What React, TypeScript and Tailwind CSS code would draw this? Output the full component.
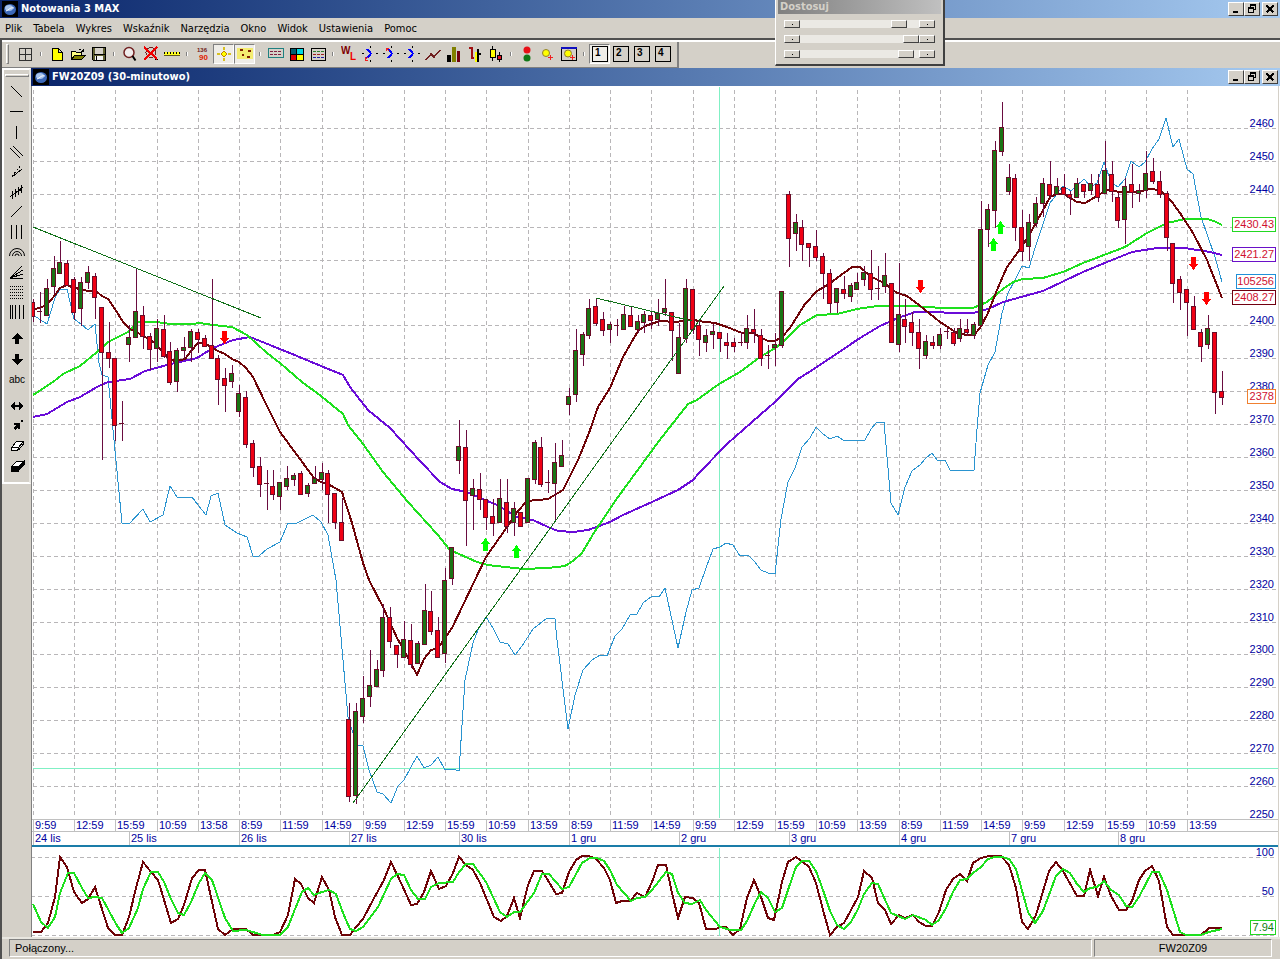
import type { ReactNode } from 'react';
import clsx from 'clsx';

type Candle = [dir: 'u' | 'd', top: number, bottom: number, high: number, low: number];

const CANDLES: Candle[] = [
  // 24 lis
  ['d', 302, 316, 299, 321], ['d', 311, 311, 292, 322], ['u', 288, 315, 279, 315], ['u', 268, 286, 256, 293],
  ['u', 262, 273, 241, 273], ['d', 263, 285, 260, 285], ['d', 279, 312, 277, 319], ['u', 282, 308, 277, 325],
  ['u', 272, 282, 266, 288], ['d', 276, 297, 273, 318], ['d', 307, 352, 307, 459], ['d', 352, 358, 322, 367],
  ['d', 358, 425, 358, 440], ['d', 423, 423, 401, 440],
  // 25 lis
  ['u', 337, 344, 325, 361], ['u', 311, 337, 269, 337], ['d', 315, 336, 306, 348], ['d', 336, 349, 333, 369],
  ['u', 328, 348, 319, 361], ['d', 329, 356, 315, 357], ['d', 351, 382, 342, 384], ['u', 350, 381, 348, 391],
  ['u', 347, 350, 337, 358], ['u', 331, 347, 329, 361], ['d', 332, 339, 329, 352], ['d', 338, 346, 335, 346],
  ['d', 345, 358, 279, 358], ['d', 358, 379, 355, 404], ['d', 378, 385, 368, 411], ['u', 373, 381, 365, 387],
  // 26 lis
  ['u', 393, 411, 385, 416], ['d', 397, 444, 391, 447], ['d', 443, 467, 440, 476], ['d', 466, 484, 457, 496],
  ['d', 483, 483, 470, 509], ['d', 486, 494, 470, 499], ['u', 482, 496, 482, 509], ['u', 478, 486, 466, 489],
  ['u', 475, 479, 473, 485], ['d', 473, 494, 471, 494], ['u', 485, 493, 483, 496], ['u', 478, 483, 466, 483],
  ['u', 472, 479, 463, 489], ['d', 473, 494, 470, 522], ['d', 493, 522, 493, 528], ['d', 522, 540, 498, 540],
  // 27 lis
  ['d', 719, 796, 703, 801], ['u', 711, 795, 703, 803], ['u', 698, 716, 676, 722], ['u', 685, 696, 650, 706],
  ['u', 669, 686, 660, 686], ['u', 617, 670, 604, 676], ['d', 617, 641, 607, 647], ['d', 645, 654, 645, 667],
  ['u', 639, 657, 621, 657], ['d', 640, 664, 624, 667], ['u', 643, 663, 641, 663], ['u', 610, 644, 584, 644],
  ['d', 611, 631, 591, 634], ['d', 630, 657, 617, 657], ['u', 580, 653, 568, 662], ['u', 547, 578, 547, 584],
  // 30 lis
  ['u', 446, 460, 420, 473], ['d', 447, 500, 430, 545], ['u', 488, 495, 479, 529], ['d', 489, 499, 473, 509],
  ['d', 499, 517, 499, 529], ['d', 516, 523, 499, 535], ['u', 498, 522, 479, 522], ['d', 502, 526, 479, 532],
  ['u', 508, 522, 502, 535], ['d', 512, 526, 512, 526], ['u', 478, 522, 478, 522], ['u', 442, 479, 440, 483],
  ['d', 447, 484, 437, 486], ['d', 482, 482, 470, 492], ['u', 462, 483, 443, 519], ['u', 455, 466, 440, 466],
  // 1 gru
  ['u', 396, 404, 388, 414], ['u', 350, 394, 329, 401], ['u', 334, 354, 332, 365], ['u', 308, 335, 299, 338],
  ['d', 306, 323, 298, 325], ['d', 319, 330, 312, 335], ['u', 324, 329, 322, 342], ['d', 325, 325, 319, 335],
  ['u', 314, 329, 306, 329], ['d', 315, 326, 307, 326], ['u', 321, 329, 315, 332], ['u', 314, 322, 311, 332],
  ['d', 315, 320, 312, 328], ['u', 313, 319, 299, 325], ['u', 308, 312, 279, 315], ['d', 312, 330, 312, 360],
  // 2 gru
  ['u', 337, 373, 323, 373], ['u', 288, 338, 279, 342], ['d', 289, 329, 289, 333], ['d', 325, 339, 320, 355],
  ['u', 335, 342, 329, 351], ['u', 331, 334, 324, 348], ['d', 332, 338, 332, 351], ['d', 342, 345, 333, 358],
  ['d', 342, 346, 338, 351], ['d', 342, 342, 332, 345], ['u', 328, 342, 315, 348], ['d', 329, 332, 309, 342],
  ['d', 335, 358, 329, 365], ['d', 355, 355, 345, 368], ['u', 344, 347, 333, 365], ['u', 291, 345, 291, 347],
  // 3 gru
  ['d', 194, 238, 191, 266], ['u', 222, 233, 214, 250], ['d', 227, 244, 220, 260], ['d', 243, 247, 243, 266],
  ['d', 246, 257, 230, 260], ['d', 256, 273, 253, 298], ['d', 273, 303, 269, 312], ['u', 288, 302, 288, 312],
  ['d', 289, 293, 276, 298], ['u', 285, 296, 283, 301], ['u', 282, 289, 273, 289], ['u', 272, 279, 266, 285],
  ['d', 273, 289, 250, 299], ['d', 288, 288, 266, 299], ['u', 275, 286, 253, 292], ['d', 283, 342, 283, 342],
  // 4 gru
  ['u', 314, 344, 263, 351], ['d', 319, 326, 299, 342], ['d', 322, 332, 312, 345], ['d', 332, 348, 319, 368],
  ['u', 341, 355, 335, 358], ['d', 342, 345, 336, 348], ['u', 334, 345, 328, 348], ['d', 331, 331, 328, 338],
  ['d', 332, 343, 328, 345], ['u', 328, 338, 319, 341], ['d', 329, 332, 319, 335], ['u', 324, 335, 322, 338],
  ['u', 229, 325, 201, 325], ['u', 209, 229, 204, 246], ['u', 150, 210, 141, 227], ['u', 127, 151, 102, 155],
  // 7 gru
  ['u', 177, 191, 164, 194], ['d', 178, 227, 174, 240], ['d', 227, 251, 210, 260], ['u', 222, 246, 214, 260],
  ['u', 203, 223, 197, 226], ['u', 183, 203, 178, 216], ['d', 184, 195, 161, 198], ['u', 186, 194, 178, 194],
  ['d', 187, 194, 174, 194], ['d', 194, 197, 191, 214], ['u', 183, 197, 178, 197], ['d', 184, 191, 184, 197],
  ['u', 183, 190, 174, 194], ['d', 184, 197, 174, 201], ['u', 170, 193, 141, 193], ['d', 174, 191, 161, 201],
  // 8 gru
  ['d', 197, 220, 193, 227], ['u', 186, 219, 178, 243], ['d', 184, 192, 164, 207], ['u', 190, 193, 184, 201],
  ['u', 173, 190, 151, 197], ['d', 171, 181, 158, 183], ['d', 181, 194, 171, 197], ['d', 193, 237, 191, 250],
  ['d', 243, 283, 243, 302], ['d', 279, 292, 276, 309], ['d', 289, 302, 289, 335], ['d', 306, 329, 296, 329],
  ['d', 332, 346, 329, 361], ['u', 328, 344, 315, 348], ['d', 332, 392, 332, 413], ['d', 391, 397, 371, 404],
];

const MA_FAST =
  '33,310 47,305 55,295 60,288 67,285 74,288 81,289 88,291 97,292 102,296 108,299 115,309 123,322 130,329 142,335 155,343 163,352 170,360 177,361 185,359 191,351 198,343 204,343 211,347 218,351 225,354 232,359 239,362 246,368 253,377 266,404 280,432 297,455 314,478 321,482 328,484 342,492 352,523 363,563 369,580 383,607 397,638 404,650 417,675 424,659 431,650 438,648 452,628 486,557 507,527 517,512 527,501 548,499 563,490 578,460 589,433 598,407 610,388 623,357 638,331 645,326 660,321 675,322 683,321 692,319 698,321 715,323 727,327 742,333 753,333 762,338 768,341 775,341 782,337 790,328 805,304 817,291 829,284 837,278 852,267 860,267 870,276 884,283 897,293 907,296 919,305 940,322 957,333 967,335 974,335 980,328 988,313 997,290 1007,267 1018,252 1028,237 1042,212 1050,197 1057,194 1064,194 1077,202 1085,203 1097,196 1107,190 1120,192 1138,192 1150,189 1160,190 1172,202 1180,213 1193,233 1207,260 1222,298';
const MA_MID =
  '33,395 53,382 63,374 80,366 97,352 108,342 128,332 138,322 157,322 170,324 192,324 200,323 213,325 232,327 247,335 267,353 280,363 302,382 321,396 343,414 348,425 363,444 383,472 408,502 437,534 450,550 477,562 488,565 523,569 548,568 565,566 573,561 582,553 595,531 618,497 659,441 688,404 697,400 719,384 740,372 760,357 777,347 783,342 800,325 817,315 837,314 857,309 877,306 913,306 942,308 973,308 987,302 1003,289 1013,282 1023,279 1043,278 1063,272 1083,263 1125,247 1147,233 1167,223 1185,219 1207,219 1214,221 1222,225';
const MA_SLOW =
  '33,417 47,414 67,402 80,397 97,387 108,382 130,379 145,371 167,365 197,358 213,348 233,340 250,337 270,345 297,356 321,366 343,375 350,387 368,410 390,428 420,461 440,482 452,489 467,492 480,498 497,505 517,517 533,520 548,527 558,531 573,532 588,530 610,522 623,515 652,502 678,490 693,480 700,472 727,444 760,415 775,402 798,379 817,367 860,338 880,326 898,318 915,312 973,313 988,309 1003,302 1043,291 1083,272 1107,262 1132,252 1157,248 1185,248 1210,252 1222,255';
const OPEN_INTEREST =
  '33,315 47,324 55,298 60,289 67,289 74,319 81,324 88,330 95,324 99,363 102,375 108,377 114,440 122,523 129,524 143,509 150,522 163,515 170,486 177,497 192,497 198,505 206,515 211,496 218,493 225,525 237,533 247,537 253,556 259,556 267,549 280,542 288,523 297,523 313,515 321,522 328,535 336,580 348,717 353,733 358,745 363,746 369,770 377,792 383,794 391,803 398,786 404,780 411,767 417,756 424,768 431,765 438,757 445,770 453,769 459,771 465,680 473,643 478,630 486,617 493,628 500,642 508,644 515,655 522,646 533,629 547,618 555,619 557,640 568,729 575,695 583,670 592,660 600,655 607,656 615,636 622,629 630,615 637,614 643,603 652,596 659,597 665,588 678,648 686,612 692,590 699,588 706,568 713,549 720,547 726,543 733,545 740,556 748,555 754,561 761,570 768,573 775,574 781,519 788,482 795,468 802,447 810,438 816,427 823,434 830,439 837,436 843,440 850,441 865,440 871,429 877,422 884,422 891,503 898,515 905,487 912,471 920,465 926,458 932,453 938,461 945,460 950,470 974,470 977,429 980,393 988,365 995,352 1002,313 1008,293 1015,280 1022,266 1029,268 1035,248 1050,203 1063,186 1071,191 1084,179 1091,187 1097,183 1104,162 1111,182 1118,187 1125,179 1131,161 1139,167 1145,162 1152,149 1159,139 1166,118 1173,147 1179,139 1187,169 1193,174 1201,217 1208,237 1215,257 1222,282';
const STOCH_K =
  '33,932 41,932 48,923 55,897 60,857 67,867 74,892 82,903 88,899 95,887 108,928 115,935 122,935 129,917 136,888 143,862 151,872 158,880 171,923 178,919 184,905 192,878 199,870 205,870 218,929 225,935 233,929 246,929 253,935 273,935 280,932 288,915 295,879 301,884 308,898 314,903 322,877 329,890 335,917 342,935 350,935 356,927 363,919 373,900 384,880 391,862 402,885 411,905 417,904 424,892 431,871 439,889 446,886 453,873 459,857 466,865 473,870 480,883 494,917 501,921 507,916 514,898 520,918 528,885 534,871 542,871 549,882 556,894 562,893 569,872 576,860 582,856 589,856 596,859 604,868 610,880 616,903 622,901 630,901 637,893 645,897 652,882 658,865 666,865 672,893 678,918 685,897 693,898 699,903 706,929 716,929 720,927 726,927 733,935 740,929 747,898 754,880 761,897 768,918 774,920 782,882 788,862 796,857 803,862 809,867 816,883 823,910 830,935 837,927 844,923 858,897 864,871 872,878 878,903 885,910 891,924 899,915 905,918 913,915 919,922 926,926 932,926 939,912 946,890 953,879 960,874 967,881 973,863 981,858 989,856 1001,856 1009,865 1016,888 1022,922 1028,929 1036,915 1049,871 1056,862 1063,871 1077,896 1084,896 1090,870 1098,896 1104,877 1111,896 1119,910 1126,910 1132,901 1139,880 1145,871 1152,866 1159,881 1167,927 1173,935 1201,935 1209,928 1222,928';
const STOCH_D =
  '33,904 41,922 48,928 55,917 60,893 68,873 74,873 82,888 88,898 95,897 102,898 116,924 122,933 129,928 138,908 143,889 151,872 158,872 164,882 171,899 178,913 184,915 191,902 199,883 205,873 212,880 225,918 233,931 246,930 263,935 280,935 288,927 295,909 302,892 308,888 314,895 322,892 329,890 336,894 343,913 350,929 356,931 363,927 378,907 391,879 397,874 404,875 411,890 418,899 425,899 431,887 439,883 453,882 459,872 466,864 473,864 486,882 500,912 507,917 514,912 520,912 534,893 542,874 549,874 562,889 569,887 582,863 590,858 597,858 604,861 610,870 617,885 631,901 637,898 645,897 652,890 666,872 672,874 678,893 685,903 692,904 700,900 706,910 720,927 731,930 741,930 747,921 755,903 761,892 768,898 775,912 782,908 788,890 796,867 802,861 809,861 816,871 823,890 830,911 837,925 844,929 851,922 858,909 864,894 872,883 878,884 891,913 905,919 913,915 926,920 932,925 939,920 946,908 953,892 960,880 967,879 973,873 981,867 988,859 995,857 1002,857 1009,859 1016,869 1028,912 1035,923 1043,911 1056,876 1063,869 1070,873 1077,884 1084,892 1090,888 1097,887 1104,881 1111,890 1119,895 1126,906 1132,907 1139,897 1152,872 1159,872 1167,890 1180,932 1186,935 1201,935 1209,932 1222,929';

const TIMES = [
  '9:59', '12:59', '15:59', '10:59', '13:58', '8:59', '11:59', '14:59', '9:59', '12:59', '15:59', '10:59', '13:59',
  '8:59', '11:59', '14:59', '9:59', '12:59', '15:59', '10:59', '13:59', '8:59', '11:59', '14:59', '9:59', '12:59',
  '15:59', '10:59', '13:59',
];

// label + index of the first candle of the session
const DAYS: [string, number][] = [
  ['24 lis', 0], ['25 lis', 14], ['26 lis', 30], ['27 lis', 46], ['30 lis', 62], ['1 gru', 78],
  ['2 gru', 94], ['3 gru', 110], ['4 gru', 126], ['7 gru', 142], ['8 gru', 158],
];

const PRICES = Array.from({ length: 22 }, (_, i) => 2460 - i * 10);

// scale labels that give way to the value tags
const COVERED = [2430, 2420, 2410];

const TAGS = [
  { label: '2430.43', y: 217, w: 43, stroke: '#22d822', fill: '#d01030' },
  { label: '2421.27', y: 247, w: 43, stroke: '#6a10c8', fill: '#d01030' },
  { label: '105256', y: 274, w: 39, stroke: '#2090d8', fill: '#d01030' },
  { label: '2408.27', y: 290, w: 43, stroke: '#700010', fill: '#d01030' },
  { label: '2378', y: 389, w: 28, stroke: '#f08030', fill: '#d01030' },
  { label: '7.94', y: 920, w: 25, stroke: '#22d822', fill: '#108010' },
];

const UP_ARROWS = [[485, 538], [516, 545], [993, 238], [1000, 221]];
const DOWN_ARROWS = [[224, 344], [920, 293], [1193, 270], [1206, 305]];

const xAt = (i: number) => Math.round(33 + i * 6.87);
const yAt = (price: number) => Math.round(128 + (2460 - price) * 3.29);

function Chart() {
  return (
    <svg
      viewBox="31 86 1249 851"
      className="block h-auto w-full bg-white font-['Liberation_Sans',Arial,sans-serif] text-[11px]"
      shapeRendering="crispEdges"
      role="img"
      aria-label="FW20Z09 (30-minutowo)"
    >
      {/* grid */}
      <g stroke="#b8b6b8" strokeDasharray="4 3">
        {PRICES.map((p) => (
          <line key={p} x1={33} x2={1276} y1={yAt(p) + 0.5} y2={yAt(p) + 0.5} />
        ))}
        {TIMES.map((_, i) => (
          <line key={i} x1={xAt(i * 6) + 0.5} x2={xAt(i * 6) + 0.5} y1={90} y2={818} />
        ))}
        {[857, 896, 935].map((y) => (
          <line key={y} x1={31} x2={1276} y1={y + 0.5} y2={y + 0.5} />
        ))}
      </g>

      {/* crosshair */}
      <g fill="#80f0c4">
        <rect x={719} y={87} width={1} height={731} />
        <rect x={719} y={848} width={1} height={88} />
        <rect x={33} y={768} width={1245} height={1} />
      </g>

      {/* time axis */}
      <path d="M31 819.5H1278M31 831.5H1278" stroke="#c0c0c0" />
      {TIMES.map((t, i) => (
        <g key={i}>
          <path d={`M${xAt(i * 6) + 0.5} 820v11`} stroke="#c0c0c0" />
          <text x={xAt(i * 6) + 2} y={829} fill="#0000a0">{t}</text>
        </g>
      ))}
      {DAYS.map(([d, i]) => (
        <g key={d}>
          <path d={`M${xAt(i) + 0.5} 832v13`} stroke="#c0c0c0" />
          <text x={xAt(i) + 2} y={842} fill="#0000a0">{d}</text>
        </g>
      ))}
      <rect x={31} y={845} width={1247} height={2} fill="#1a7ca8" />

      {/* studies */}
      <g fill="none">
        <polyline points={OPEN_INTEREST} stroke="#2a94d0" />
        <polyline points={MA_SLOW} stroke="#6a0cd8" strokeWidth={2} />
        <polyline points={MA_MID} stroke="#1ee01e" strokeWidth={2} />
        <polyline points={MA_FAST} stroke="#6e0408" strokeWidth={2} />
      </g>

      {CANDLES.map(([dir, top, bottom, high, low], i) => {
        const x = xAt(i);
        return (
          <g key={i}>
            <rect x={x} y={high} width={1} height={low - high + 1} fill="#6a0c40" />
            <rect x={x - 3} y={top} width={5} height={bottom - top + 1} fill="#6a0c28" />
            {bottom - top > 1 && (
              <rect x={x - 2} y={top + 1} width={3} height={bottom - top - 1} fill={dir === 'u' ? '#1a7414' : '#f00014'} />
            )}
          </g>
        );
      })}

      {/* trend lines */}
      <path d="M33 227L261 318M353 803L724 286M596 298L692 321" stroke="#107018" fill="none" />

      {DOWN_ARROWS.map(([x, y]) => (
        <path key={x} d={`M${x + 0.5} ${y}l-4.5 -6h2v-7h5v7h2z`} fill="#ff0000" />
      ))}
      {UP_ARROWS.map(([x, y]) => (
        <path key={x} d={`M${x + 0.5} ${y}l-4.5 6h2v7h5v-7h2z`} fill="#00ff00" />
      ))}

      {/* oscillator */}
      <g fill="none" strokeWidth={2}>
        <polyline points={STOCH_K} stroke="#6e0408" />
        <polyline points={STOCH_D} stroke="#1ee01e" />
      </g>

      {/* price scale */}
      <g textAnchor="end" fill="#0000a0">
        {PRICES.filter((p) => !COVERED.includes(p)).map((p) => (
          <text key={p} x={1274} y={yAt(p) - 1}>{p}</text>
        ))}
        <text x={1274} y={856}>100</text>
        <text x={1274} y={895}>50</text>
      </g>
      {TAGS.map((t) => (
        <g key={t.label}>
          <rect x={1276 - t.w - 0.5} y={t.y + 0.5} width={t.w} height={14} fill="#fff" stroke={t.stroke} />
          <text x={1274} y={t.y + 11} textAnchor="end" fill={t.fill}>{t.label}</text>
        </g>
      ))}
      <path d="M31.5 86V937" stroke="#808080" />
      <path d="M1278.5 86V937" stroke="#d4d0c8" />
    </svg>
  );
}

function Icon({ children }: { children: ReactNode }) {
  return (
    <svg viewBox="0 0 16 16" className="size-4" fill="none" stroke="#000" shapeRendering="crispEdges" aria-hidden="true">
      {children}
    </svg>
  );
}

const iconLetter = "font-['Liberation_Sans',Arial,sans-serif] text-[10px] font-bold";

type Tool = { name: string; icon: ReactNode; pressed?: boolean };

function numberTool(n: number): Tool {
  return {
    name: `Układ ${n}`,
    pressed: n === 1,
    icon: (
      <>
        <rect x="0.5" y="0.5" width="15" height="15" />
        <text x="3" y="10" fill="#000" stroke="none" className={iconLetter}>{n}</text>
      </>
    ),
  };
}

const TOOL_GROUPS: Tool[][] = [
  [{ name: 'Tabela', icon: <path d="M1.5 2.5h12v12h-12zM7.5 2.5v12M1.5 8.5h12" stroke="#303030" /> }],
  [
    { name: 'Nowy', icon: <path d="M3.5 2.5h6l4 4v8h-10zM9.5 2.5v4h4" fill="#ffff00" /> },
    {
      name: 'Otwórz',
      icon: (
        <>
          <path d="M1.5 13.5v-8h4l1 1h5v3" fill="#ffff80" />
          <path d="M1.5 13.5l3 -4h11l-4 4z" fill="#808000" />
          <path d="M9 3.5h2M12 4.5h1M13.5 3v3M11 5.5h3" />
        </>
      ),
    },
    {
      name: 'Zapisz',
      icon: (
        <>
          <path d="M1.5 1.5h13v13h-12l-1 -1z" fill="#606030" />
          <path d="M4 2h8v6h-8z" fill="#d4d0c8" stroke="none" />
          <path d="M4 10h8v4h-8z" fill="#f4f4f4" stroke="none" />
          <path d="M5.5 10v4M2.5 8.5h11" />
        </>
      ),
    },
  ],
  [
    {
      name: 'Powiększ',
      icon: (
        <g shapeRendering="auto">
          <circle cx="7" cy="6.5" r="5" fill="#f0ecec" stroke="#702020" strokeWidth="1.5" />
          <path d="M10.5 10l3 4.5" strokeWidth="2" />
        </g>
      ),
    },
    {
      name: 'Anuluj powiększenie',
      icon: (
        <>
          <circle cx="8" cy="6.5" r="5" stroke="#702020" />
          <path d="M11 10l3 4" strokeWidth="2" />
          <path d="M1 1l13 12M14 1l-13 13" stroke="#f00000" strokeWidth="2" />
        </>
      ),
    },
    {
      name: 'Linijka',
      icon: (
        <>
          <path d="M0 8h16" stroke="#ffff20" strokeWidth="4" />
          <path d="M0 7h16" stroke="#000" strokeWidth="2" strokeDasharray="1 2" />
          <path d="M0 9.5h16" stroke="#605820" />
        </>
      ),
    },
  ],
  [
    {
      name: 'Wartości',
      icon: (
        <g stroke="none" className="font-['Liberation_Sans',Arial,sans-serif] font-bold">
          <text x="2" y="6" fill="#702020" fontSize="6">136</text>
          <text x="4" y="14" fill="#e02000" fontSize="8">90</text>
        </g>
      ),
    },
    {
      name: 'Krzyż',
      pressed: true,
      icon: (
        <>
          <path d="M8 1v3M8 12v3M1 8h3M12 8h3" stroke="#d8c020" strokeWidth="2" />
          <path d="M8 5l3 3l-3 3l-3 -3z" fill="#ffff00" stroke="#c08000" />
        </>
      ),
    },
    {
      name: 'Punkty',
      pressed: true,
      icon: (
        <>
          <path d="M0 2h16v11h-16z" fill="#f4ec70" stroke="none" />
          <path d="M3 4h3M11 5h3M5 9h2M10 11h3" stroke="#802000" strokeWidth="2" />
        </>
      ),
    },
  ],
  [
    {
      name: 'Legenda',
      icon: (
        <>
          <path d="M0.5 2.5h15v9h-15z" stroke="#208080" />
          <path d="M2 5.5h12M2 8.5h12" stroke="#802040" strokeDasharray="3 1" />
        </>
      ),
    },
    {
      name: 'Kolory',
      icon: (
        <>
          <path d="M1.5 2.5h13v12h-13z" fill="#fff" />
          <path d="M2 3h5v5h-5z" fill="#006070" stroke="none" />
          <path d="M8 3h6v5h-6z" fill="#00d8e0" stroke="none" />
          <path d="M2 9h5v5h-5z" fill="#e00000" stroke="none" />
          <path d="M8 9h6v5h-6z" fill="#ffff00" stroke="none" />
          <path d="M7.5 2v12M1 8.5h13" />
        </>
      ),
    },
    {
      name: 'Lista',
      icon: (
        <>
          <path d="M1.5 2.5h14v12h-14z" />
          <path d="M3 5.5h11" stroke="#308030" strokeDasharray="3 1" />
          <path d="M3 8.5h11" stroke="#a02020" strokeDasharray="3 1" />
          <path d="M3 11.5h11" stroke="#2020a0" strokeDasharray="3 1" />
        </>
      ),
    },
  ],
  [
    {
      name: 'WL',
      icon: (
        <>
          <text x="0" y="8" fill="#800000" stroke="none" className={iconLetter}>W</text>
          <text x="9" y="14" fill="#f00000" stroke="none" className={iconLetter}>L</text>
        </>
      ),
    },
    {
      name: 'Cykl 1',
      icon: (
        <>
          <path d="M0 7.5h2M14 7.5h2M8.5 0v2M8.5 14v2" />
          <path d="M5 3l4 4.5l-4 4.5" stroke="#0000ff" strokeWidth="2" />
          <path d="M3 14l3 -3M3 11v3h3" stroke="#f02020" />
        </>
      ),
    },
    {
      name: 'Cykl 2',
      icon: (
        <>
          <path d="M0 7.5h2M14 7.5h2M8.5 0v2M8.5 14v2" />
          <path d="M5 3l4 4.5l-4 4.5" stroke="#0000ff" strokeWidth="2" />
          <path d="M3 2l3 3M3 5v-3h3" stroke="#f02020" />
        </>
      ),
    },
    {
      name: 'Cykl 3',
      icon: (
        <>
          <path d="M0 7.5h2M14 7.5h2M8.5 0v2M8.5 14v2" />
          <path d="M5 3l4 4.5l-4 4.5" stroke="#0000ff" strokeWidth="2" />
        </>
      ),
    },
    { name: 'Liniowy', icon: <path d="M1 14l5 -6l3 3l6 -7" stroke="#702020" strokeWidth="1.5" /> },
    {
      name: 'Słupkowy',
      icon: (
        <g stroke="none">
          <rect x="1" y="9" width="4" height="7" fill="#000" />
          <rect x="6" y="1" width="4" height="15" fill="#808000" />
          <rect x="11" y="5" width="3" height="11" fill="#700010" />
        </g>
      ),
    },
    {
      name: 'OHLC',
      icon: (
        <>
          <path d="M5 1v12M2 2h3M5 12h2" stroke="#a01010" strokeWidth="2" />
          <path d="M9 6v10" stroke="#ffff00" strokeWidth="2" />
          <path d="M11 3v13M11 7.5h3" strokeWidth="2" />
        </>
      ),
    },
    {
      name: 'Świecowy',
      icon: (
        <>
          <path d="M4.5 0v15" />
          <path d="M2 3h5v8h-5z" fill="#ffff00" strokeWidth="1" />
          <path d="M11.5 6v10" />
          <path d="M9.5 9.5h4v4h-4z" fill="#e01020" />
        </>
      ),
    },
  ],
  [
    {
      name: 'Sygnały',
      icon: (
        <g stroke="none" shapeRendering="auto">
          <circle cx="8" cy="4" r="3.5" fill="#e81018" />
          <circle cx="8" cy="12" r="3.5" fill="#107818" />
        </g>
      ),
    },
    {
      name: 'Dodaj alert',
      icon: (
        <>
          <circle cx="6" cy="7" r="3.5" fill="#ffff00" stroke="#908030" shapeRendering="auto" />
          <path d="M10.5 9v5M8 11.5h5" stroke="#f02020" />
        </>
      ),
    },
    {
      name: 'Okno alertu',
      icon: (
        <>
          <path d="M0.5 1.5h15v13h-15z" />
          <path d="M0 2h16" stroke="#1010c0" strokeWidth="2" />
          <circle cx="7" cy="7.5" r="3.5" fill="#ffff00" stroke="#908030" shapeRendering="auto" />
          <path d="M11.5 9v5M9 11.5h5" stroke="#f02020" />
        </>
      ),
    },
  ],
  [numberTool(1), numberTool(2), numberTool(3), numberTool(4)],
];

const DRAW_GROUPS: Tool[][] = [
  [
    { name: 'Linia opadająca', icon: <path d="M2 2l11 11" /> },
    { name: 'Linia pozioma', icon: <path d="M1 7.5h13" /> },
    { name: 'Linia pionowa', icon: <path d="M7.5 2v13" /> },
    { name: 'Kanał', icon: <path d="M1 4l10 10M4 2l10 10" /> },
    { name: 'Widły', icon: <><path d="M3 13l10 -8" /><path d="M3 13l9 -12M3 13l3 -5" strokeDasharray="2 2" /></> },
    { name: 'Regresja', icon: <path d="M1 13l13 -10M3.5 7v8M6.5 5v8M9.5 3v8M12.5 1v8M3 10.5h2M9 6.5h3" /> },
    { name: 'Linia rosnąca', icon: <path d="M2 13l11 -11" /> },
    { name: 'Cykle', icon: <path d="M2.5 1v14M7.5 1v14M12.5 1v14" /> },
    {
      name: 'Łuki',
      icon: (
        <g shapeRendering="auto">
          <path d="M0.5 12a7.5 7.5 0 0 1 15 0M3.5 12a4.5 4.5 0 0 1 9 0M6 12a2 2 0 0 1 4 0" />
        </g>
      ),
    },
    { name: 'Wachlarz', icon: <path d="M1 14l12 -12M1 14l13 -8M1 14l13 -4M1 14h13" /> },
    { name: 'Poziomy Fibonacciego', icon: <path d="M1 2.5h14M1 5.5h14M1 8.5h14M1 11.5h14M1 14.5h14" strokeDasharray="1 1" /> },
    { name: 'Strefy czasowe', icon: <path d="M1.5 1v14M3.5 1v14M6.5 1v14M10.5 1v14M14.5 1v14" /> },
  ],
  [
    { name: 'Strzałka w górę', icon: <path d="M8 2l6 6h-4v5h-4v-5h-4z" fill="#000" stroke="none" /> },
    { name: 'Strzałka w dół', icon: <path d="M8 14l6 -6h-4v-5h-4v5h-4z" fill="#000" stroke="none" /> },
    { name: 'Tekst', icon: <text x="0" y="12" fill="#000" stroke="none" className="font-['Liberation_Sans',Arial,sans-serif] text-[10px]">abc</text> },
  ],
  [
    { name: 'Przesuń', icon: <><path d="M1 8l5 -4v8zM15 8l-5 -4v8z" fill="#000" stroke="none" /><path d="M4 8h8" strokeWidth="2" /></> },
    { name: 'Zmień', icon: <path d="M5 5h6v6h-2v-2l-3 3l-2 -2l3 -3h-2zM12 2h2v2h-2z" fill="#000" stroke="none" /> },
    { name: 'Gumka', icon: <path d="M2.5 9.5l5 -6h7l-5 6zM2.5 9.5v3h6l1 -3M9.5 12l5 -6v-2" fill="#fff" /> },
    { name: 'Wyczyść', icon: <><path d="M2.5 8.5l5 -5h7l-5 5z" fill="#fff" /><path d="M2 8.5h8l5 -5v3l-6 7h-7z" fill="#000" /></> },
  ],
];

function ToolButton({ tool, small }: { tool: Tool; small?: boolean }) {
  return (
    <button
      type="button"
      aria-label={tool.name}
      aria-pressed={tool.pressed}
      className={clsx(
        'flex shrink-0 items-center justify-center',
        small ? 'h-5 w-5' : 'h-5 w-[21px]',
        tool.pressed && 'border border-t-[#808080] border-r-white border-b-white border-l-[#808080] bg-[#efede8]',
      )}
    >
      <Icon>{tool.icon}</Icon>
    </button>
  );
}

const raised = 'border border-t-white border-l-white border-r-[#404040] border-b-[#404040] bg-[#d4d0c8]';

function AppLogo() {
  return (
    <svg viewBox="0 0 16 16" className="size-4 bg-black" aria-hidden="true">
      <ellipse cx="8" cy="8.5" rx="6" ry="5.5" fill="#3c68b8" />
      <ellipse cx="7" cy="7" rx="4" ry="3" fill="#a8c4ec" />
      <path d="M4 10c3 -1 4 -4 8 -3" stroke="#fff" fill="none" />
    </svg>
  );
}

function TitleBar({ title }: { title: string }) {
  return (
    <div className="flex h-[18px] items-center gap-[3px] bg-linear-to-r from-[#0a246a] to-[#a6caf0] px-0.5 text-white">
      <AppLogo />
      <h1 className="flex-1 pt-px text-[11px] font-bold">{title}</h1>
      <div className="flex">
        <button type="button" aria-label="Minimalizuj" className={clsx(raised, 'flex h-3.5 w-4 items-center justify-center')}>
          <svg viewBox="0 0 10 10" className="size-2.5" shapeRendering="crispEdges"><path d="M2 7h5v2h-5z" /></svg>
        </button>
        <button type="button" aria-label="Przywróć" className={clsx(raised, 'flex h-3.5 w-4 items-center justify-center')}>
          <svg viewBox="0 0 10 10" className="size-2.5" shapeRendering="crispEdges" fill="none" stroke="#000">
            <path d="M3.5 3v-2.5h5v5h-2M3 1.5h6M1.5 3.5h5v5h-5zM1 4.5h6" />
          </svg>
        </button>
        <button type="button" aria-label="Zamknij" className={clsx(raised, 'ml-0.5 flex h-3.5 w-4 items-center justify-center')}>
          <svg viewBox="0 0 10 10" className="size-2.5" shapeRendering="crispEdges" stroke="#000" strokeWidth="1.5"><path d="M1.5 1.5l7 7M8.5 1.5l-7 7" /></svg>
        </button>
      </div>
    </div>
  );
}

const MENU = ['Plik', 'Tabela', 'Wykres', 'Wskaźnik', 'Narzędzia', 'Okno', 'Widok', 'Ustawienia', 'Pomoc'];

function ScrollButton({ label }: { label: string }) {
  return (
    <button type="button" aria-label={label} className={clsx(raised, 'flex h-2 w-4 items-center justify-center')}>
      <span className="size-px bg-black" />
    </button>
  );
}

function AdjustPanel() {
  const rows = [
    { name: 'Pozycja', value: 88 },
    { name: 'Szerokość', value: 100 },
    { name: 'Wysokość', value: 95 },
  ];
  return (
    <section className="absolute top-0 left-[775px] w-[170px] border-r-2 border-b-2 border-l border-r-[#404040] border-b-[#404040] border-l-white bg-[#d4d0c8] pb-1.5">
      <h2 className="mx-0.5 h-3.5 bg-linear-to-r from-[#808080] to-[#c0c0c0] pl-0.5 text-[11px] leading-[14px] font-bold text-[#d4d0c8]">
        Dostosuj
      </h2>
      <div className="flex flex-col gap-[7px] px-2 pt-1.5">
        {rows.map((r) => (
          <div key={r.name} className="flex h-2">
            <ScrollButton label={`${r.name} mniej`} />
            <input
              type="range"
              aria-label={r.name}
              defaultValue={r.value}
              className="h-2 min-w-0 flex-1 appearance-none bg-[#ebe9e4] [&::-webkit-slider-thumb]:h-2 [&::-webkit-slider-thumb]:w-4 [&::-webkit-slider-thumb]:appearance-none [&::-webkit-slider-thumb]:border [&::-webkit-slider-thumb]:border-t-white [&::-webkit-slider-thumb]:border-r-[#404040] [&::-webkit-slider-thumb]:border-b-[#404040] [&::-webkit-slider-thumb]:border-l-white [&::-webkit-slider-thumb]:bg-[#d4d0c8]"
            />
            <ScrollButton label={`${r.name} więcej`} />
          </div>
        ))}
      </div>
    </section>
  );
}

export default function App() {
  return (
    <div className="relative bg-[#d4d0c8] font-['DejaVu_Sans_Condensed','Liberation_Sans',Tahoma,sans-serif] text-[11px] text-black">
      <TitleBar title="Notowania 3 MAX" />

      <nav className="flex h-5 items-center gap-[11px] px-[5px] pt-0.5">
        {MENU.map((m) => (
          <button key={m} type="button">{m}</button>
        ))}
      </nav>

      <div className="border-t-2 border-l-2 border-[#505050]">
        <div className="flex border-t-2 border-white">
          <div role="toolbar" aria-label="Narzędzia" className="flex h-[26px] items-center border-r-2 border-b border-[#808080] pr-1 pb-0.5">
            <span className="mr-1.5 ml-1 h-5 w-[3px] border border-t-white border-r-[#808080] border-b-[#808080] border-l-white" />
            {TOOL_GROUPS.map((group, i) => (
              <div key={i} className="flex items-center">
                {i > 0 && <span className="mx-1 h-1 w-0.5 border-r border-l border-r-white border-l-[#808080]" />}
                {group.map((t) => (
                  <ToolButton key={t.name} tool={t} />
                ))}
              </div>
            ))}
          </div>
        </div>

        <div className="flex">
          <aside className="w-[29px] shrink-0">
            <div role="toolbar" aria-label="Rysowanie" aria-orientation="vertical" className="flex flex-col items-center gap-[7px] border-2 border-t-white border-r-[#e8e6e0] border-b-white border-l-white pb-1.5">
              <span className="mt-1 -mb-0.5 h-[3px] w-6 border border-t-white border-r-[#808080] border-b-[#808080] border-l-white" />
              {DRAW_GROUPS.map((group, i) => (
                <div key={i} className="flex flex-col">
                  {group.map((t) => (
                    <ToolButton key={t.name} tool={t} small />
                  ))}
                </div>
              ))}
            </div>
          </aside>
          <main className="min-w-0 flex-1">
            <TitleBar title="FW20Z09 (30-minutowo)" />
            <Chart />
          </main>
        </div>

        <footer className="flex gap-0.5 border-t-2 border-[#e8e6e0] pr-2 pb-0.5 pl-[7px] font-['Liberation_Sans',Arial,sans-serif]">
          <div className="h-[18px] flex-1 border border-t-[#808080] border-r-white border-b-white border-l-[#808080] px-[5px] leading-4">
            Połączony...
          </div>
          <div className="h-[18px] w-[178px] border border-t-[#808080] border-r-white border-b-white border-l-[#808080] text-center leading-4">
            FW20Z09
          </div>
        </footer>
      </div>

      <AdjustPanel />
    </div>
  );
}
